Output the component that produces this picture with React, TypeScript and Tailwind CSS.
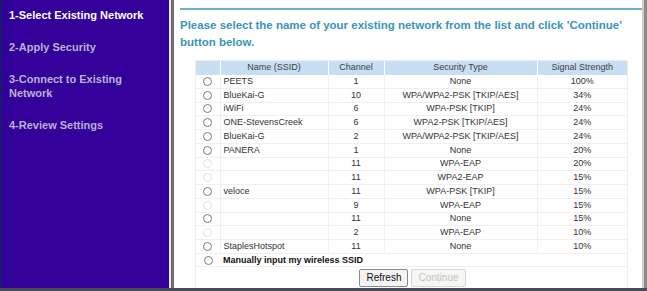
const networks = [
  { ssid: "PEETS", ch: "1", sec: "None", sig: "100%", on: true },
  { ssid: "BlueKai-G", ch: "10", sec: "WPA/WPA2-PSK [TKIP/AES]", sig: "34%", on: true },
  { ssid: "iWiFi", ch: "6", sec: "WPA-PSK [TKIP]", sig: "24%", on: true },
  { ssid: "ONE-StevensCreek", ch: "6", sec: "WPA2-PSK [TKIP/AES]", sig: "24%", on: true },
  { ssid: "BlueKai-G", ch: "2", sec: "WPA/WPA2-PSK [TKIP/AES]", sig: "24%", on: true },
  { ssid: "PANERA", ch: "1", sec: "None", sig: "20%", on: true },
  { ssid: "", ch: "11", sec: "WPA-EAP", sig: "20%", on: false },
  { ssid: "", ch: "11", sec: "WPA2-EAP", sig: "15%", on: false },
  { ssid: "veloce", ch: "11", sec: "WPA-PSK [TKIP]", sig: "15%", on: true },
  { ssid: "", ch: "9", sec: "WPA-EAP", sig: "15%", on: false },
  { ssid: "", ch: "11", sec: "None", sig: "15%", on: true },
  { ssid: "", ch: "2", sec: "WPA-EAP", sig: "10%", on: false },
  { ssid: "StaplesHotspot", ch: "11", sec: "None", sig: "10%", on: true },
]

const Radio = ({ on }: { on: boolean }) => (
  <span
    className={`block w-[9px] h-[9px] rounded-full border ${
      on ? "border-[#7a7a7a] bg-white" : "border-[#e2e2e2] bg-white"
    }`}
  ></span>
)

const steps = [
  { label: "1-Select Existing Network", active: true },
  { label: "2-Apply Security", active: false },
  { label: "3-Connect to Existing Network", active: false },
  { label: "4-Review Settings", active: false },
]

export default function App() {
  return (
    <div
      className="w-[647px] h-[291px] flex flex-col bg-white overflow-hidden"
      style={{ fontFamily: '"Liberation Sans", Arial, sans-serif' }}
    >
      <div className="flex flex-1 min-h-0">
        {/* sidebar */}
        <div className="w-[169px] bg-[#330099] border-l-2 border-[#1a1a70] pl-[7px] pt-[8px] flex flex-col">
          {steps.map((s, i) => (
            <div
              key={i}
              className={`text-[11px] font-bold leading-[14px] w-[140px] ${
                s.active ? "text-white" : "text-[#b9b3d6]"
              } mb-[18px]`}
            >
              {s.label}
            </div>
          ))}
        </div>
        <div className="w-[2px] bg-[#e8e8f0]"></div>
        <div className="w-[3px] bg-[#6e6e6e]"></div>

        {/* content */}
        <div className="flex-1 flex flex-col min-w-0">
          <div className="h-[3px] bg-[#555555]"></div>
          <div className="flex-1 pl-[6px] pt-[8px]">
            <div className="h-[2px] bg-[#6db0cc]"></div>
            <p className="mt-[7px] text-[11.5px] font-bold leading-[17px] text-[#3a96b6] whitespace-nowrap">
              Please select the name of your existing network from the list and click 'Continue'
              <br />
              button below.
            </p>
            <div className="mt-[9px] ml-[15px] w-[433px] border border-[#eeeeee]">
              <table className="w-full border-collapse text-[9px] text-[#333333] table-fixed">
                <colgroup>
                  <col className="w-[24px]" />
                  <col className="w-[108px]" />
                  <col className="w-[56px]" />
                  <col className="w-[153px]" />
                  <col />
                </colgroup>
                <thead>
                  <tr className="h-[13px] bg-[#c8def2] text-[#3d3d3d]">
                    <th className="p-0 font-normal"></th>
                    <th className="p-0 font-normal border-l border-white">Name (SSID)</th>
                    <th className="p-0 font-normal border-l border-white">Channel</th>
                    <th className="p-0 font-normal border-l border-white">Security Type</th>
                    <th className="p-0 font-normal border-l border-white">Signal Strength</th>
                  </tr>
                </thead>
                <tbody>
                  {networks.map((n, i) => (
                    <tr key={i} className="h-[13.75px] border-b border-[#f0f0f0] leading-[11px]">
                      <td className="p-0 align-middle">
                        <span className="flex justify-center">
                          <Radio on={n.on} />
                        </span>
                      </td>
                      <td className="p-0 pl-[3px] border-l border-[#f0f0f0] whitespace-nowrap">{n.ssid}</td>
                      <td className="p-0 text-center border-l border-[#f0f0f0]">{n.ch}</td>
                      <td className="p-0 text-center border-l border-[#f0f0f0] whitespace-nowrap">{n.sec}</td>
                      <td className="p-0 text-center border-l border-[#f0f0f0]">{n.sig}</td>
                    </tr>
                  ))}
                  <tr className="h-[13px] leading-[11px]">
                    <td className="p-0 align-middle">
                      <span className="flex justify-center">
                        <Radio on={true} />
                      </span>
                    </td>
                    <td colSpan={4} className="p-0 pl-[3px] font-bold text-[#111111] whitespace-nowrap">
                      Manually input my wireless SSID
                    </td>
                  </tr>
                </tbody>
              </table>
              <div className="flex justify-center gap-[3px] pt-[2px] pb-[1px] pl-[2px] border-t border-[#f0f0f0]">
                <button className="h-[18px] px-[6px] text-[10px] text-[#111] bg-[#f4f4f4] border border-[#8a8a8a] rounded-[2px] leading-none">
                  Refresh
                </button>
                <button className="h-[18px] px-[6px] text-[10px] text-[#c4c4c4] bg-[#f6f6f2] border border-[#d8d8d0] rounded-[2px] leading-none">
                  Continue
                </button>
              </div>
            </div>
          </div>
        </div>
        <div className="w-[2px] bg-[#cfcfcf]"></div>
        <div className="w-[3px] bg-[#8c8c8c]"></div>
      </div>
      <div className="h-[3px] bg-[#4a4a5a]"></div>
    </div>
  )
}
